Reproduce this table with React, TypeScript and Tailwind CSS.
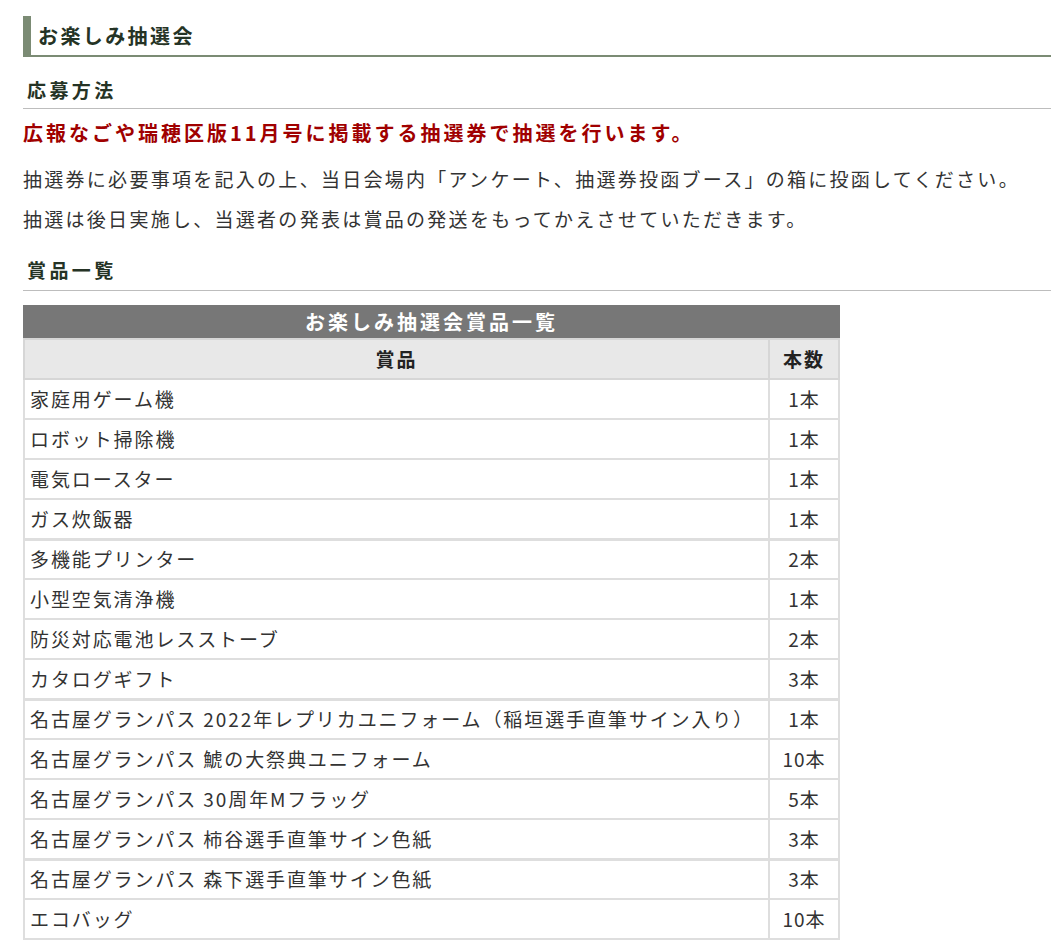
const prizes: [string, string][] = [
  ['家庭用ゲーム機', '1本'],
  ['ロボット掃除機', '1本'],
  ['電気ロースター', '1本'],
  ['ガス炊飯器', '1本'],
  ['多機能プリンター', '2本'],
  ['小型空気清浄機', '1本'],
  ['防災対応電池レスストーブ', '2本'],
  ['カタログギフト', '3本'],
  ['名古屋グランパス 2022年レプリカユニフォーム（稲垣選手直筆サイン入り）', '1本'],
  ['名古屋グランパス 鯱の大祭典ユニフォーム', '10本'],
  ['名古屋グランパス 30周年Mフラッグ', '5本'],
  ['名古屋グランパス 柿谷選手直筆サイン色紙', '3本'],
  ['名古屋グランパス 森下選手直筆サイン色紙', '3本'],
  ['エコバッグ', '10本'],
];

// rows after which the source draws a slightly heavier rule
const heavy = new Set([3, 7, 11]);

export default function App() {
  return (
    <div
      className="bg-white min-h-screen pl-[23px] pt-[16px] text-[#333]"
      style={{ fontFamily: '"Noto Sans CJK JP", "Noto Sans", sans-serif' }}
    >
      <h2 className="border-l-[8px] border-b-2 border-[#7b8b74] pl-[7px] h-[41px] flex items-center text-[20px] tracking-[0.12em] font-bold text-[#253325]">
        お楽しみ抽選会
      </h2>

      <h3 className="mt-[20px] border-b border-[#bdbdbd] pl-[4px] pb-[5px] text-[19px] tracking-[0.18em] font-bold leading-[26px] text-[#253325]">
        応募方法
      </h3>
      <p className="mt-[11px] text-[20px] tracking-[0.15em] font-bold leading-[26px] text-[#a00000]">
        広報なごや瑞穂区版11月号に掲載する抽選券で抽選を行います。
      </p>
      <p className="mt-[20px] text-[19px] tracking-[0.12em] leading-[26px]">
        抽選券に必要事項を記入の上、当日会場内「アンケート、抽選券投函ブース」の箱に投函してください。
      </p>
      <p className="mt-[14px] text-[19px] tracking-[0.12em] leading-[26px]">
        抽選は後日実施し、当選者の発表は賞品の発送をもってかえさせていただきます。
      </p>

      <h3 className="mt-[25px] border-b border-[#bdbdbd] pl-[4px] pb-[7px] text-[19px] tracking-[0.18em] font-bold leading-[26px] text-[#253325]">
        賞品一覧
      </h3>

      <table className="mt-[14px] w-[817px] border-collapse text-[19px] tracking-[0.1em]">
        <caption className="bg-[#777777] text-white font-bold h-[33px] leading-[33px] text-[20px] tracking-[0.15em]">
          お楽しみ抽選会賞品一覧
        </caption>
        <thead>
          <tr className="bg-[#e8e8e8] h-[40px]">
            <th className="border-2 border-[#d6d6d6] font-bold text-[#222]">賞品</th>
            <th className="border-2 border-[#d6d6d6] font-bold text-[#222] w-[70px]">本数</th>
          </tr>
        </thead>
        <tbody>
          {prizes.map(([name, count], i) => (
            <tr key={i} className="h-[40px]">
              <td
                className={`border-x-2 border-t-2 border-[#dedede] px-[5px] text-left ${
                  heavy.has(i) ? 'border-b-[3px]' : 'border-b-2'
                }`}
              >
                {name}
              </td>
              <td
                className={`border-x-2 border-t-2 border-[#dedede] text-center tracking-[0.05em] ${
                  heavy.has(i) ? 'border-b-[3px]' : 'border-b-2'
                }`}
              >
                {count}
              </td>
            </tr>
          ))}
        </tbody>
      </table>
    </div>
  );
}
